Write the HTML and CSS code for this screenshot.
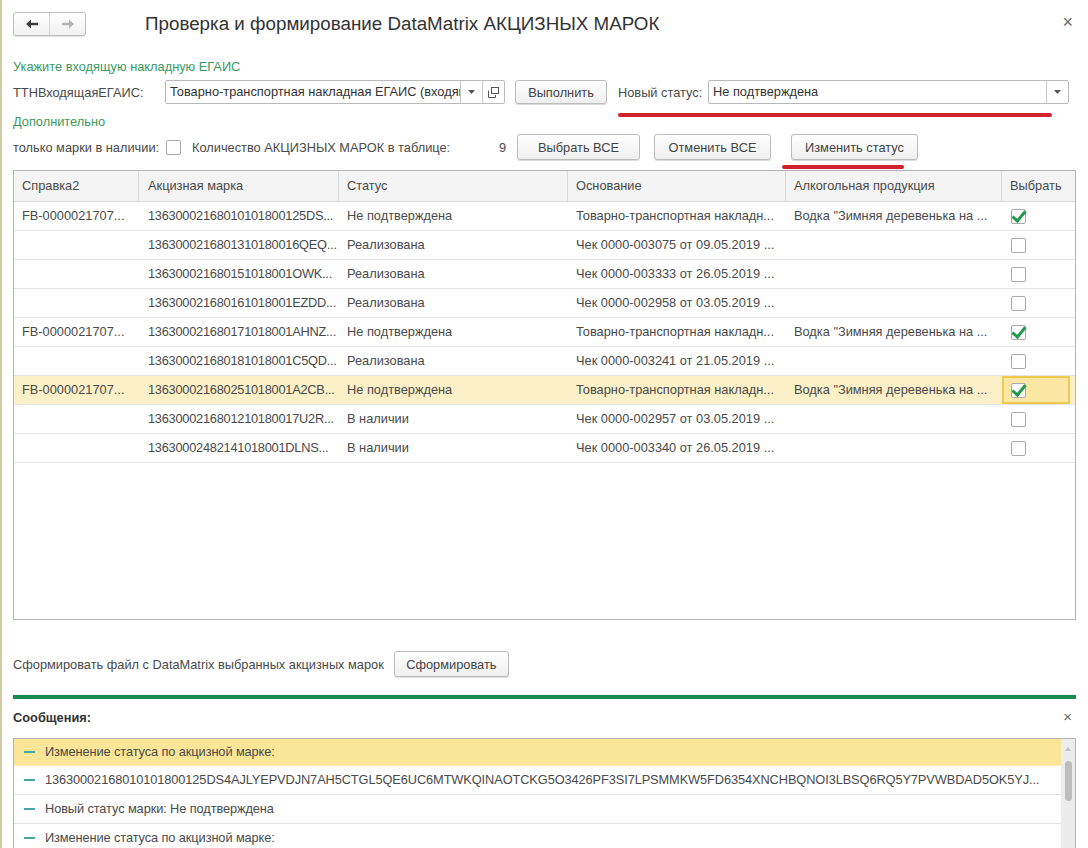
FILE: index.html
```html
<!DOCTYPE html>
<html lang="ru">
<head>
<meta charset="utf-8">
<title>Проверка и формирование DataMatrix АКЦИЗНЫХ МАРОК</title>
<link rel="stylesheet" href="styles.css">
</head>
<body>
<div class="window">
  <div class="header">
    <div class="nav">
      <span class="nav-btn"><svg width="14" height="12" viewBox="0 0 14 12"><path d="M1 6 L6 1.5 L6 4.7 L13 4.7 L13 7.3 L6 7.3 L6 10.5 Z" fill="#3d3d3d"/></svg></span>
      <span class="nav-btn"><svg width="14" height="12" viewBox="0 0 14 12"><path d="M13 6 L8 1.5 L8 4.7 L1 4.7 L1 7.3 L8 7.3 L8 10.5 Z" fill="#b5b5b5"/></svg></span>
    </div>
    <h1 class="title">Проверка и формирование DataMatrix АКЦИЗНЫХ МАРОК</h1>
    <span class="close">×</span>
  </div>

  <div class="group-label first">Укажите входящую накладную ЕГАИС</div>
  <div class="row row-ttn">
    <span class="label label-ttn">ТТНВходящаяЕГАИС:</span>
    <div class="field field-ttn">
      <span class="field-text">Товарно-транспортная накладная ЕГАИС (входящая)</span>
      <span class="field-btn"><svg width="7" height="4" viewBox="0 0 7 4"><path d="M0 0 L7 0 L3.5 4 Z" fill="#555"/></svg></span>
      <span class="field-btn"><svg width="11" height="11" viewBox="0 0 11 11"><rect x="3.5" y="0.5" width="7" height="6" fill="none" stroke="#555"/><path d="M0.5 3.5 L0.5 10.5 L7.5 10.5 L7.5 8" fill="none" stroke="#555"/></svg></span>
    </div>
    <button class="btn btn-run">Выполнить</button>
    <span class="label label-status">Новый статус:</span>
    <div class="field field-status">
      <span class="field-text">Не подтверждена</span>
      <span class="field-btn"><svg width="7" height="4" viewBox="0 0 7 4"><path d="M0 0 L7 0 L3.5 4 Z" fill="#555"/></svg></span>
    </div>
    <span class="mark mark-status"></span>
  </div>

  <div class="group-label second">Дополнительно</div>
  <div class="row row-extra">
    <span class="label label-only">только марки в наличии:</span>
    <span class="cb cb-only"></span>
    <span class="label label-count">Количество АКЦИЗНЫХ МАРОК в таблице:</span>
    <span class="count">9</span>
    <button class="btn btn-all">Выбрать ВСЕ</button>
    <button class="btn btn-none">Отменить ВСЕ</button>
    <button class="btn btn-change">Изменить статус</button>
    <span class="mark mark-change"></span>
  </div>

  <div class="table">
    <div class="tr th">
      <div class="c c1">Справка2</div>
      <div class="c c2">Акцизная марка</div>
      <div class="c c3">Статус</div>
      <div class="c c4">Основание</div>
      <div class="c c5">Алкогольная продукция</div>
      <div class="c c6">Выбрать</div>
    </div>
    <div class="tr">
      <div class="c c1">FB-0000021707...</div>
      <div class="c c2">13630002168010101800125DS...</div>
      <div class="c c3">Не подтверждена</div>
      <div class="c c4">Товарно-транспортная накладн...</div>
      <div class="c c5">Водка "Зимняя деревенька на ...</div>
      <div class="c c6"><span class="cb checked"></span></div>
    </div>
    <div class="tr">
      <div class="c c1"></div>
      <div class="c c2">1363000216801310180016QEQ...</div>
      <div class="c c3">Реализована</div>
      <div class="c c4">Чек 0000-003075 от 09.05.2019 ...</div>
      <div class="c c5"></div>
      <div class="c c6"><span class="cb"></span></div>
    </div>
    <div class="tr">
      <div class="c c1"></div>
      <div class="c c2">136300021680151018001OWK...</div>
      <div class="c c3">Реализована</div>
      <div class="c c4">Чек 0000-003333 от 26.05.2019 ...</div>
      <div class="c c5"></div>
      <div class="c c6"><span class="cb"></span></div>
    </div>
    <div class="tr">
      <div class="c c1"></div>
      <div class="c c2">136300021680161018001EZDD...</div>
      <div class="c c3">Реализована</div>
      <div class="c c4">Чек 0000-002958 от 03.05.2019 ...</div>
      <div class="c c5"></div>
      <div class="c c6"><span class="cb"></span></div>
    </div>
    <div class="tr">
      <div class="c c1">FB-0000021707...</div>
      <div class="c c2">136300021680171018001AHNZ...</div>
      <div class="c c3">Не подтверждена</div>
      <div class="c c4">Товарно-транспортная накладн...</div>
      <div class="c c5">Водка "Зимняя деревенька на ...</div>
      <div class="c c6"><span class="cb checked"></span></div>
    </div>
    <div class="tr">
      <div class="c c1"></div>
      <div class="c c2">136300021680181018001C5QD...</div>
      <div class="c c3">Реализована</div>
      <div class="c c4">Чек 0000-003241 от 21.05.2019 ...</div>
      <div class="c c5"></div>
      <div class="c c6"><span class="cb"></span></div>
    </div>
    <div class="tr selected">
      <div class="c c1">FB-0000021707...</div>
      <div class="c c2">136300021680251018001A2CB...</div>
      <div class="c c3">Не подтверждена</div>
      <div class="c c4">Товарно-транспортная накладн...</div>
      <div class="c c5">Водка "Зимняя деревенька на ...</div>
      <div class="c c6 current"><span class="cb checked"></span></div>
    </div>
    <div class="tr">
      <div class="c c1"></div>
      <div class="c c2">1363000216801210180017U2R...</div>
      <div class="c c3">В наличии</div>
      <div class="c c4">Чек 0000-002957 от 03.05.2019 ...</div>
      <div class="c c5"></div>
      <div class="c c6"><span class="cb"></span></div>
    </div>
    <div class="tr">
      <div class="c c1"></div>
      <div class="c c2">13630002482141018001DLNS...</div>
      <div class="c c3">В наличии</div>
      <div class="c c4">Чек 0000-003340 от 26.05.2019 ...</div>
      <div class="c c5"></div>
      <div class="c c6"><span class="cb"></span></div>
    </div>
  </div>

  <div class="row row-form">
    <span class="label">Сформировать файл с DataMatrix выбранных акцизных марок</span>
    <button class="btn btn-form">Сформировать</button>
  </div>

  <div class="green-line"></div>

  <div class="msg-head">
    <span class="msg-title">Сообщения:</span>
    <span class="close small">×</span>
  </div>

  <div class="messages">
    <div class="msg-list">
      <div class="msg active"><span class="dash"></span><span class="msg-text">Изменение статуса по акцизной марке:</span></div>
      <div class="msg"><span class="dash"></span><span class="msg-text">13630002168010101800125DS4AJLYEPVDJN7AH5CTGL5QE6UC6MTWKQINAOTCKG5O3426PF3SI7LPSMMKW5FD6354XNCHBQNOI3LBSQ6RQ5Y7PVWBDAD5OK5YJ...</span></div>
      <div class="msg"><span class="dash"></span><span class="msg-text">Новый статус марки: Не подтверждена</span></div>
      <div class="msg"><span class="dash"></span><span class="msg-text">Изменение статуса по акцизной марке:</span></div>
    </div>
    <div class="scrollbar">
      <span class="sb-up"></span>
      <span class="sb-thumb"></span>
    </div>
  </div>
</div>
</body>
</html>
```

FILE: styles.css
```css
html, body {
  margin: 0;
  padding: 0;
  background: #ffffff;
}
body {
  width: 1088px;
  height: 848px;
  overflow: hidden;
  font-family: "Liberation Sans", Arial, sans-serif;
  font-size: 12.8px;
  color: #4a4a4a;
}
.window {
  height: 848px;
  box-sizing: border-box;
  border-left: 2px solid #cfc9a6;
  padding: 12px 12px 0 11px;
  position: relative;
}
.header {
  display: flex;
  align-items: center;
  height: 24px;
}
.nav {
  display: flex;
  width: 73px;
  height: 24px;
  box-sizing: border-box;
  border: 1px solid #bdbdbd;
  border-radius: 3px;
  background: linear-gradient(#ffffff, #f1f1f1);
  box-shadow: 0 1px 1px rgba(0,0,0,0.12);
}
.nav-btn {
  flex: 1;
  display: flex;
  align-items: center;
  justify-content: center;
}
.nav-btn + .nav-btn {
  border-left: 1px solid #d6d6d6;
}
.title {
  margin: 0 0 0 59px;
  font-size: 18.8px;
  font-weight: normal;
  color: #333333;
  line-height: 24px;
  position: relative;
  top: 0;
}
.close {
  margin-left: auto;
  margin-right: 3px;
  font-size: 18px;
  color: #666;
  line-height: 20px;
  position: relative;
  top: -2px;
}
.group-label {
  color: #3a9a5e;
  line-height: 16px;
  height: 16px;
}
.group-label.first { margin-top: 23px; }
.group-label.second { margin-top: 10px; }
.row {
  display: flex;
  align-items: center;
  position: relative;
  white-space: nowrap;
}
.row-ttn {
  margin-top: 5px;
  height: 24px;
}
.label-ttn { width: 152px; }
.field {
  display: flex;
  height: 24px;
  box-sizing: border-box;
  border: 1px solid #b9b9b9;
  border-radius: 2px;
  background: #fff;
  color: #333;
}
.field-text {
  flex: 1;
  min-width: 0;
  padding-left: 4px;
  line-height: 22px;
  white-space: nowrap;
  overflow: hidden;
}
.field-btn {
  width: 21px;
  flex: none;
  border-left: 1px solid #c8c8c8;
  display: flex;
  align-items: center;
  justify-content: center;
}
.field-ttn { width: 340px; }
.btn {
  font-family: inherit;
  font-size: 12.8px;
  color: #444;
  height: 24px;
  box-sizing: border-box;
  border: 1px solid #bcbcbc;
  border-radius: 3px;
  background: linear-gradient(#ffffff, #efefef);
  box-shadow: 0 1px 1px rgba(0,0,0,0.15);
  padding: 0;
  cursor: default;
}
.btn-run { margin-left: 10px; width: 92px; }
.label-status { margin-left: 11px; width: 90px; }
.field-status { width: 361px; }
.mark {
  position: absolute;
  height: 4px;
  border-radius: 2px;
  background: #d2222e;
}
.mark-status {
  left: 605px;
  width: 434px;
  top: 33px;
}
.row-extra {
  margin-top: 4px;
  height: 26px;
}
.label-only { width: 153px; }
.cb {
  display: inline-block;
  width: 13px;
  height: 13px;
  border: 1px solid #a9a9a9;
  border-radius: 2px;
  background: #fff;
  position: relative;
  box-sizing: content-box;
  flex: none;
}
.label-count { margin-left: 11px; width: 307px; }
.count { width: 8px; }
.row-extra .btn { height: 26px; }
.btn-all { margin-left: 10px; width: 123px; }
.btn-none { margin-left: 14px; width: 117px; }
.btn-change { margin-left: 20px; width: 127px; }
.mark-change {
  left: 769px;
  width: 122px;
  top: 31px;
}
.cb.checked::after {
  content: "";
  position: absolute;
  left: 3px;
  top: -2px;
  width: 5px;
  height: 11px;
  border-right: 3px solid #1f9a4c;
  border-bottom: 3px solid #1f9a4c;
  transform: rotate(40deg);
}
.table {
  margin-top: 10px;
  height: 450px;
  box-sizing: border-box;
  border: 1px solid #b4b4b4;
  display: flex;
  flex-direction: column;
}
.tr {
  display: flex;
  height: 29px;
  box-sizing: border-box;
  border-bottom: 1px solid #e4e4e4;
  flex: none;
}
.tr.th {
  height: 31px;
  background: #f4f4f4;
  border-bottom: 1px solid #d9d9d9;
}
.c {
  box-sizing: border-box;
  padding-left: 8px;
  line-height: 28px;
  white-space: nowrap;
  overflow: hidden;
  color: #4a4a4a;
}
.th .c {
  line-height: 30px;
  border-right: 1px solid #d9d9d9;
}
.th .c:last-child { border-right: none; }
.c1 { width: 125px; }
.c2 { width: 200px; padding-left: 9px; letter-spacing: -0.25px; }
.th .c2 { letter-spacing: 0; }
.c3 { width: 229px; }
.c4 { width: 218px; }
.c5 { width: 216px; }
.c6 {
  width: 73px;
  display: flex;
  align-items: center;
}
.tr:not(.th) .c6 { padding-left: 9px; }
.tr.selected { background: #fbf0c8; }
.c6.current {
  width: 68px;
  background: #fbe6a4;
  outline: 2px solid #efc94c;
  outline-offset: -2px;
}
.row-form {
  margin-top: 31px;
  height: 26px;
}
.btn-form {
  margin-left: 10px;
  width: 115px;
  height: 26px;
}
.green-line {
  margin-top: 18px;
  height: 4px;
  background: #188a4b;
}
.msg-head {
  display: flex;
  align-items: center;
  margin-top: 10px;
  height: 16px;
}
.msg-title {
  font-weight: bold;
  color: #333;
}
.close.small {
  font-size: 15px;
  margin-right: 4px;
  top: 0;
}
.messages {
  margin-top: 13px;
  height: 140px;
  box-sizing: border-box;
  border: 1px solid #b4b4b4;
  display: flex;
}
.msg-list {
  flex: 1;
  min-width: 0;
}
.msg {
  height: 29px;
  box-sizing: border-box;
  line-height: 28px;
  border-bottom: 1px solid #e4e4e4;
  white-space: nowrap;
  display: flex;
  align-items: center;
  color: #4a4a4a;
}
.msg-text {
  overflow: hidden;
  min-width: 0;
  letter-spacing: -0.1px;
}
.msg.active {
  height: 27px;
  background: #fbe596;
  border-bottom: 1px solid #f6ecc4;
}
.dash {
  display: inline-block;
  width: 11px;
  height: 2px;
  background: #45a6a6;
  margin: 0 10px 0 10px;
  flex: none;
}
.scrollbar {
  width: 14px;
  flex: none;
  background: #ececec;
  position: relative;
  display: flex;
  flex-direction: column;
  align-items: center;
}
.sb-up {
  margin-top: 8px;
  width: 0;
  height: 0;
  border-left: 3px solid transparent;
  border-right: 3px solid transparent;
  border-bottom: 4px solid #c0c0c0;
}
.sb-thumb {
  margin-top: 10px;
  width: 7px;
  height: 40px;
  border-radius: 4px;
  background: #bdbdbd;
}
```
